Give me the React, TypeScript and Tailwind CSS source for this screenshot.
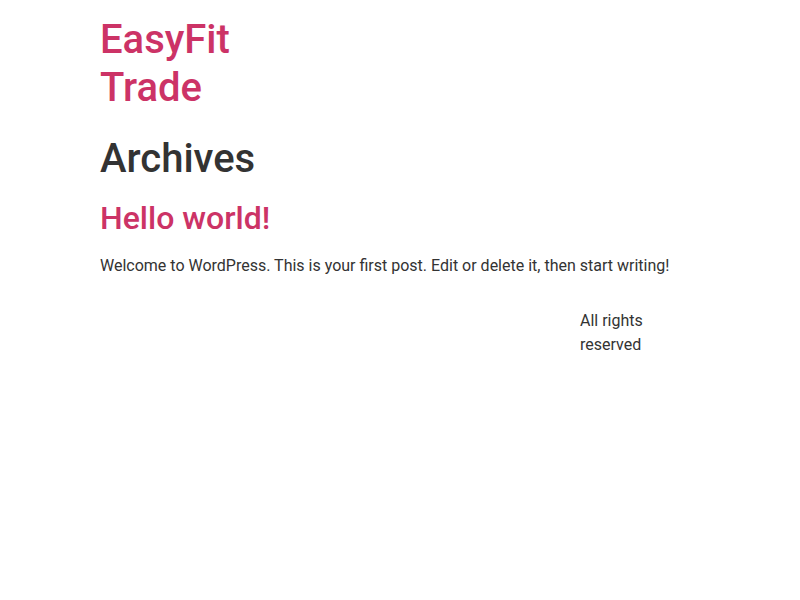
// Archive page — simple WordPress-style theme layout

const pink = "text-[#cc3366]";

export default function App() {
  return (
    <div className="min-h-[600px] bg-white font-['Roboto',sans-serif] text-[#333333] text-base leading-6">
      <header className="mx-auto w-[600px] pt-4 pb-4 flex justify-between">
        <div className="w-[160px]">
          <h1 className={`text-[40px] leading-[48px] font-medium ${pink}`}>
            <a href="#">EasyFit Trade</a>
          </h1>
        </div>
        <nav />
      </header>

      <main className="mx-auto w-[600px]">
        <div className="pt-[7px]">
          <h1 className="text-[40px] leading-[48px] font-medium">Archives</h1>
        </div>
        <article className="mt-4">
          <h2 className={`text-[32px] leading-[38px] font-medium ${pink}`}>
            <a href="#">Hello world!</a>
          </h2>
          <p className="mt-[17px]">
            Welcome to WordPress. This is your first post. Edit or delete it,
            then start writing!
          </p>
        </article>
      </main>

      <footer className="mx-auto w-[600px] mt-[31px] flex justify-between">
        <div />
        <p className="w-[120px]">All rights reserved</p>
      </footer>
    </div>
  );
}
